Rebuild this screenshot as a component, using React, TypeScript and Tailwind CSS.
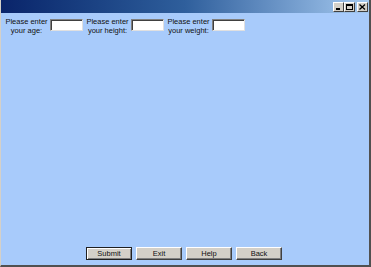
import React from "react";

function Field({ label1, label2 }: { label1: string; label2: string }) {
  return (
    <div className="flex items-start">
      <div className="w-[43px] flex flex-col items-center whitespace-nowrap leading-[9px] text-[7.5px] text-[#111111] pt-[1px]">
        <div>{label1}</div>
        <div>{label2}</div>
      </div>
      <div className="ml-[2px] mt-[3px] w-[33px] h-[12px] bg-white border-t border-l border-[#808080] border-r border-b border-r-[#e0e0e0] border-b-[#e0e0e0] shadow-[inset_1px_1px_0_#404040]" />
    </div>
  );
}

function Btn({ label, primary }: { label: string; primary?: boolean }) {
  return (
    <div
      className={
        "w-[46px] h-[13px] flex items-center justify-center bg-[#d4d0c8] text-[7.5px] text-[#111111] leading-none " +
        (primary
          ? "border border-[#202020] shadow-[inset_1px_1px_0_#ffffff,inset_-1px_-1px_0_#808080]"
          : "border-t border-l border-t-white border-l-white border-r border-b border-r-[#404040] border-b-[#404040] shadow-[inset_-1px_-1px_0_#808080]")
      }
    >
      {label}
    </div>
  );
}

function WinBtn({ children }: { children: React.ReactNode }) {
  return (
    <div className="w-[11px] h-[10px] bg-[#d4d0c8] border-t border-l border-t-white border-l-white border-r border-b border-r-[#404040] border-b-[#404040] flex items-center justify-center">
      {children}
    </div>
  );
}

export default function App() {
  return (
    <div
      className="w-[371px] h-[267px] flex flex-col bg-[#a8cbfb] border-l border-l-[#d4d0c8] border-r-2 border-r-[#505050] border-b-2 border-b-[#505050] overflow-hidden"
      style={{ fontFamily: '"Liberation Sans", Arial, sans-serif' }}
    >
      <div className="h-[13px] shrink-0 flex items-center justify-end pr-[1px] bg-gradient-to-r from-[#0a246a] via-[#2f5f9c] to-[#a6caf0]">
        <WinBtn>
          <svg width="7" height="6" viewBox="0 0 7 6">
            <rect x="1" y="4" width="4" height="2" fill="#000" />
          </svg>
        </WinBtn>
        <WinBtn>
          <svg width="7" height="6" viewBox="0 0 7 6">
            <rect x="0.5" y="0.5" width="6" height="5" fill="none" stroke="#000" />
            <rect x="0" y="0" width="7" height="2" fill="#000" />
          </svg>
        </WinBtn>
        <div className="ml-[2px]">
          <WinBtn>
            <svg width="7" height="6" viewBox="0 0 7 6">
              <path d="M0.5 0.5 L6 5.5 M6 0.5 L0.5 5.5" stroke="#000" strokeWidth="1.3" />
            </svg>
          </WinBtn>
        </div>
      </div>
      <div className="flex-1 flex flex-col">
        <div className="flex gap-[3px] pl-[4px] pt-[3px]">
          <Field label1="Please enter" label2="your age:" />
          <Field label1="Please enter" label2="your height:" />
          <Field label1="Please enter" label2="your weight:" />
        </div>
        <div className="flex-1" />
        <div className="flex pl-[85px] gap-[4px] pb-[5px]">
          <Btn label="Submit" primary />
          <Btn label="Exit" />
          <Btn label="Help" />
          <Btn label="Back" />
        </div>
      </div>
    </div>
  );
}
